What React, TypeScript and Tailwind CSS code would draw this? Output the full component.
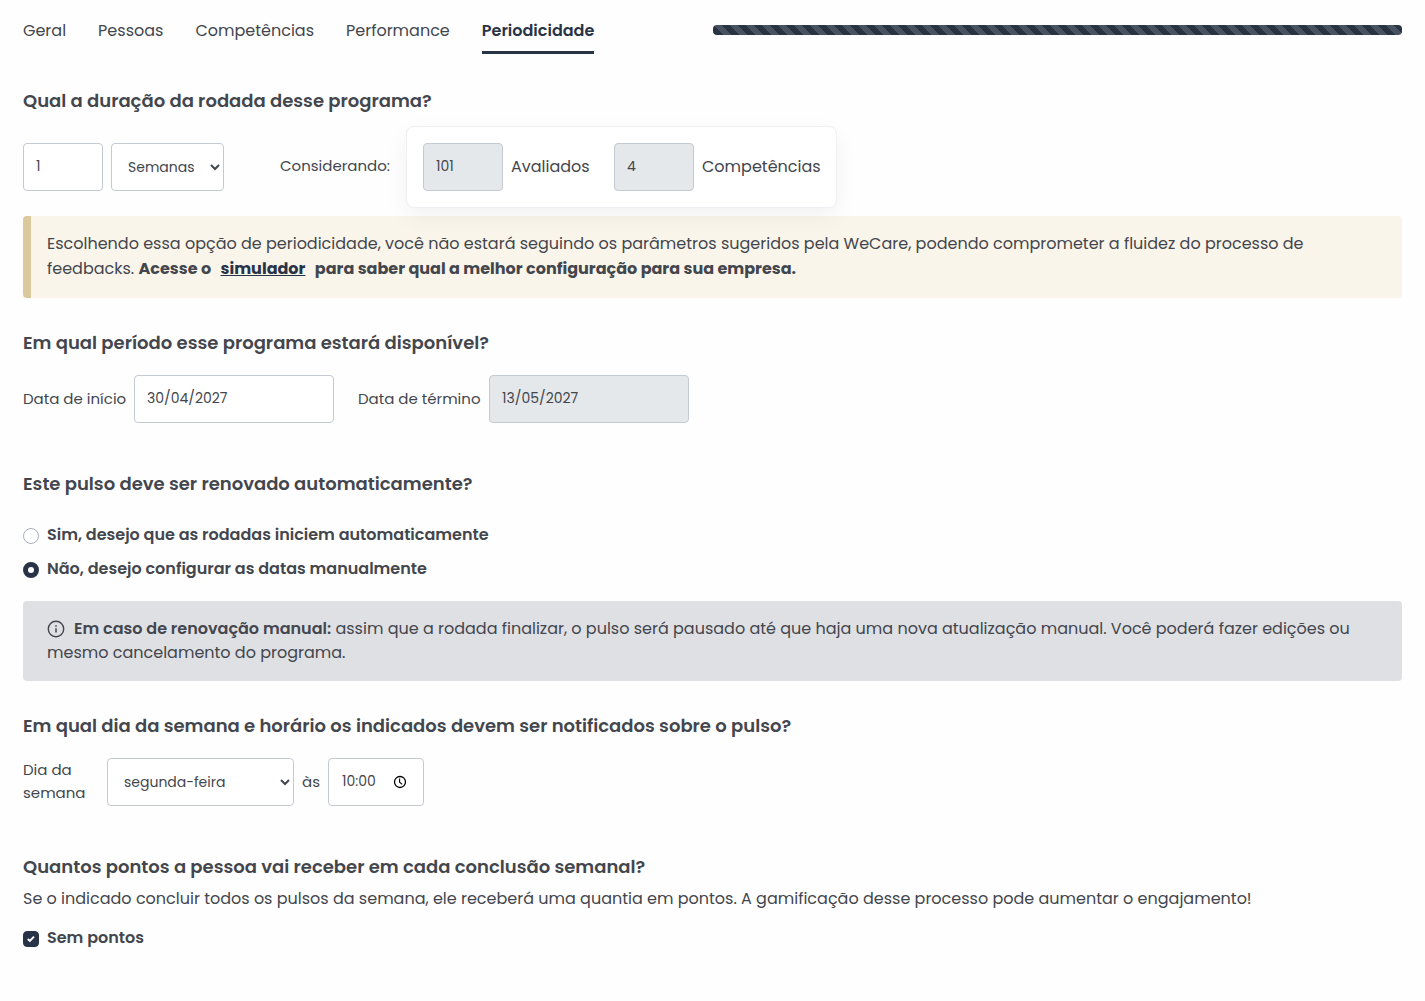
import type { ReactNode } from "react";

const tabs = ["Geral", "Pessoas", "Competências", "Performance", "Periodicidade"];
const activeTab = "Periodicidade";

const field =
  "h-12 rounded border border-[#c4c9d2] bg-white px-3 text-sm text-[#43464d]";
const readOnlyField =
  "h-12 rounded border border-[#c4c9d2] bg-[#e4e8eb] px-3 text-sm text-[#43464d]";

function Title({ children }: { children: ReactNode }) {
  return <h2 className="text-lg leading-7 font-semibold">{children}</h2>;
}

function ClockIcon() {
  return (
    <svg
      className="h-[14px] w-[14px] text-black"
      viewBox="0 0 14 14"
      fill="none"
      stroke="currentColor"
      aria-hidden="true"
    >
      <circle cx="7" cy="7" r="5.5" strokeWidth="1.3" />
      <path d="M6.6 3.6v3.6l2.6 2.2" strokeWidth="1.1" />
    </svg>
  );
}

function InfoIcon() {
  return (
    <svg
      className="h-[18px] w-[18px]"
      viewBox="0 0 18 18"
      fill="none"
      stroke="currentColor"
      aria-hidden="true"
    >
      <circle cx="9" cy="9" r="7.7" strokeWidth="1.4" />
      <path d="M9 8.2v4.3M9 5.3v1.5" strokeWidth="1.5" />
    </svg>
  );
}

export default function App() {
  return (
    <main className="min-h-screen bg-[#fefefe] px-[23px] pt-[19px] pb-12 font-[Poppins,Inter,sans-serif] text-base text-[#43464d]">
      <div className="grid grid-cols-2">
        <nav className="flex items-start gap-8">
          {tabs.map((tab) => (
            <a
              key={tab}
              href="#"
              className={
                tab === activeTab
                  ? "border-b-3 border-[#283347] pb-2 leading-6 font-semibold text-[#283347]"
                  : "pb-2 leading-6"
              }
            >
              {tab}
            </a>
          ))}
        </nav>
        <div
          role="progressbar"
          aria-label="Progresso"
          aria-valuenow={100}
          className="mt-[6px] h-[10px] rounded bg-[#283444] bg-[linear-gradient(45deg,rgba(255,255,255,.15)_25%,transparent_25%,transparent_50%,rgba(255,255,255,.15)_50%,rgba(255,255,255,.15)_75%,transparent_75%,transparent)] bg-[length:16px_16px]"
        />
      </div>

      <section className="mt-[33px]">
        <Title>Qual a duração da rodada desse programa?</Title>
        <div className="mt-[11px] flex items-center">
          <input
            aria-label="Duração"
            defaultValue="1"
            className={`${field} w-20 pb-[2px]`}
          />
          <select
            aria-label="Unidade"
            className={`${field} ml-2 w-[113px]`}
          >
            <option>Semanas</option>
            <option>Meses</option>
          </select>
          <span className="ml-14 w-[126px] pb-[2px] text-[15px]">
            Considerando:
          </span>
          <div className="flex items-center rounded-lg border border-[#eeeff2] bg-white p-4 shadow-[0_8px_24px_rgba(0,0,0,0.05)]">
            <input
              id="avaliados"
              readOnly
              value="101"
              className={`${readOnlyField} w-20 pb-[2px]`}
            />
            <label htmlFor="avaliados" className="ml-2 w-[103px]">
              Avaliados
            </label>
            <input
              id="competencias"
              readOnly
              value="4"
              className={`${readOnlyField} w-20 pb-[2px]`}
            />
            <label htmlFor="competencias" className="ml-2 w-[118px]">
              Competências
            </label>
          </div>
        </div>
        <div className="mt-2 rounded border-l-8 border-[#dbc99d] bg-[#faf5ea] px-4 pt-[15px] pb-[17px] leading-[25px]">
          Escolhendo essa opção de periodicidade, você não estará seguindo os
          parâmetros sugeridos pela WeCare, podendo comprometer a fluidez do
          processo de feedbacks.{" "}
          <strong className="font-bold">
            Acesse o{" "}
            <a href="#" className="mx-[6px] text-[#283347] underline">
              simulador
            </a>{" "}
            para saber qual a melhor configuração para sua empresa.
          </strong>
        </div>
      </section>

      <section className="mt-[31px]">
        <Title>Em qual período esse programa estará disponível?</Title>
        <div className="mt-[18px] flex items-center text-[15px]">
          <label htmlFor="inicio" className="w-[111px]">
            Data de início
          </label>
          <input
            id="inicio"
            defaultValue="30/04/2027"
            className={`${field} w-[200px] pb-[2px]`}
          />
          <label htmlFor="termino" className="ml-6 w-[131px]">
            Data de término
          </label>
          <input
            id="termino"
            readOnly
            value="13/05/2027"
            className={`${readOnlyField} w-[200px] pb-[2px]`}
          />
        </div>
      </section>

      <section className="mt-[47px]">
        <Title>Este pulso deve ser renovado automaticamente?</Title>
        <div className="mt-[25px] flex flex-col gap-[10px] font-semibold">
          <label className="flex items-end gap-2">
            <input
              type="radio"
              name="renovacao"
              className="mb-[3px] h-4 w-4 appearance-none rounded-full border border-[#a9b0bb] bg-white checked:border-5 checked:border-[#283347]"
            />
            Sim, desejo que as rodadas iniciem automaticamente
          </label>
          <label className="flex items-end gap-2">
            <input
              type="radio"
              name="renovacao"
              defaultChecked
              className="mb-[3px] h-4 w-4 appearance-none rounded-full border border-[#a9b0bb] bg-white checked:border-5 checked:border-[#283347]"
            />
            Não, desejo configurar as datas manualmente
          </label>
        </div>
        <div className="mt-5 rounded bg-[#dfe0e4] px-6 py-4">
          <span className="mr-[9px] inline-block align-[-4px]">
            <InfoIcon />
          </span>
          <strong className="font-semibold">
            Em caso de renovação manual:
          </strong>{" "}
          assim que a rodada finalizar, o pulso será pausado até que haja uma
          nova atualização manual. Você poderá fazer edições ou mesmo
          cancelamento do programa.
        </div>
      </section>

      <section className="mt-[31px]">
        <Title>
          Em qual dia da semana e horário os indicados devem ser notificados
          sobre o pulso?
        </Title>
        <div className="mt-[18px] flex items-center text-[15px]">
          <label htmlFor="dia" className="w-[84px] pr-4 pb-[2px] leading-[23px]">
            Dia da semana
          </label>
          <select id="dia" className={`${field} w-[187px]`}>
            <option>segunda-feira</option>
            <option>terça-feira</option>
            <option>quarta-feira</option>
            <option>quinta-feira</option>
            <option>sexta-feira</option>
          </select>
          <label htmlFor="hora" className="w-[34px] text-center">
            às
          </label>
          <div className="flex h-12 w-24 items-center justify-between rounded border border-[#c4c9d2] bg-white pr-4 pl-[13px]">
            <input
              id="hora"
              defaultValue="10:00"
              className="w-12 pb-[2px] text-sm"
            />
            <ClockIcon />
          </div>
        </div>
      </section>

      <section className="mt-[47px]">
        <Title>Quantos pontos a pessoa vai receber em cada conclusão semanal?</Title>
        <p className="mt-[6px]">
          Se o indicado concluir todos os pulsos da semana, ele receberá uma
          quantia em pontos. A gamificação desse processo pode aumentar o
          engajamento!
        </p>
        <label className="mt-[15px] flex items-end gap-2 font-semibold">
          <span className="mb-[3px] grid h-4 w-4">
            <input
              type="checkbox"
              defaultChecked
              className="peer col-start-1 row-start-1 h-4 w-4 appearance-none rounded border border-[#a9b0bb] checked:border-[#283347] checked:bg-[#283347]"
            />
            <svg
              className="pointer-events-none col-start-1 row-start-1 h-4 w-4 text-white opacity-0 peer-checked:opacity-100"
              viewBox="0 0 16 16"
              fill="none"
              stroke="currentColor"
              strokeWidth="1.9"
              aria-hidden="true"
            >
              <path d="M4.8 8l2.1 2 4.1-4.4" />
            </svg>
          </span>
          Sem pontos
        </label>
      </section>
    </main>
  );
}
